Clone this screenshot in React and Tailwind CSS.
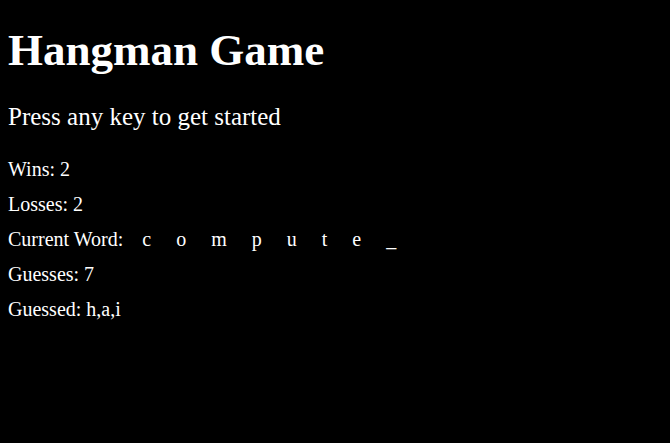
const WORD = ['c', 'o', 'm', 'p', 'u', 't', 'e', '_'];

const STATS = [
    { label: 'Wins', value: '2' },
    { label: 'Losses', value: '2' },
];

export default function App() {
    return (
        <div className="min-h-screen bg-black text-white px-2 pt-[25px] font-['Liberation_Serif',serif]">
            <h1 className="text-[45px] font-bold leading-[1.15]">Hangman Game</h1>
            <h2 className="text-[25px] font-normal leading-[1.15] mt-[26px]">Press any key to get started</h2>

            <div className="text-[20px] leading-[35px] mt-[20px]">
                {STATS.map((s) => (
                    <div key={s.label}>{s.label}: {s.value}</div>
                ))}
                <div>
                    Current Word:
                    {WORD.map((ch, i) => (
                        <span key={i} className={i === 0 ? 'ml-[19px]' : 'ml-[25px]'}>{ch}</span>
                    ))}
                </div>
                <div>Guesses: 7</div>
                <div>Guessed: h,a,i</div>
            </div>
        </div>
    );
}
